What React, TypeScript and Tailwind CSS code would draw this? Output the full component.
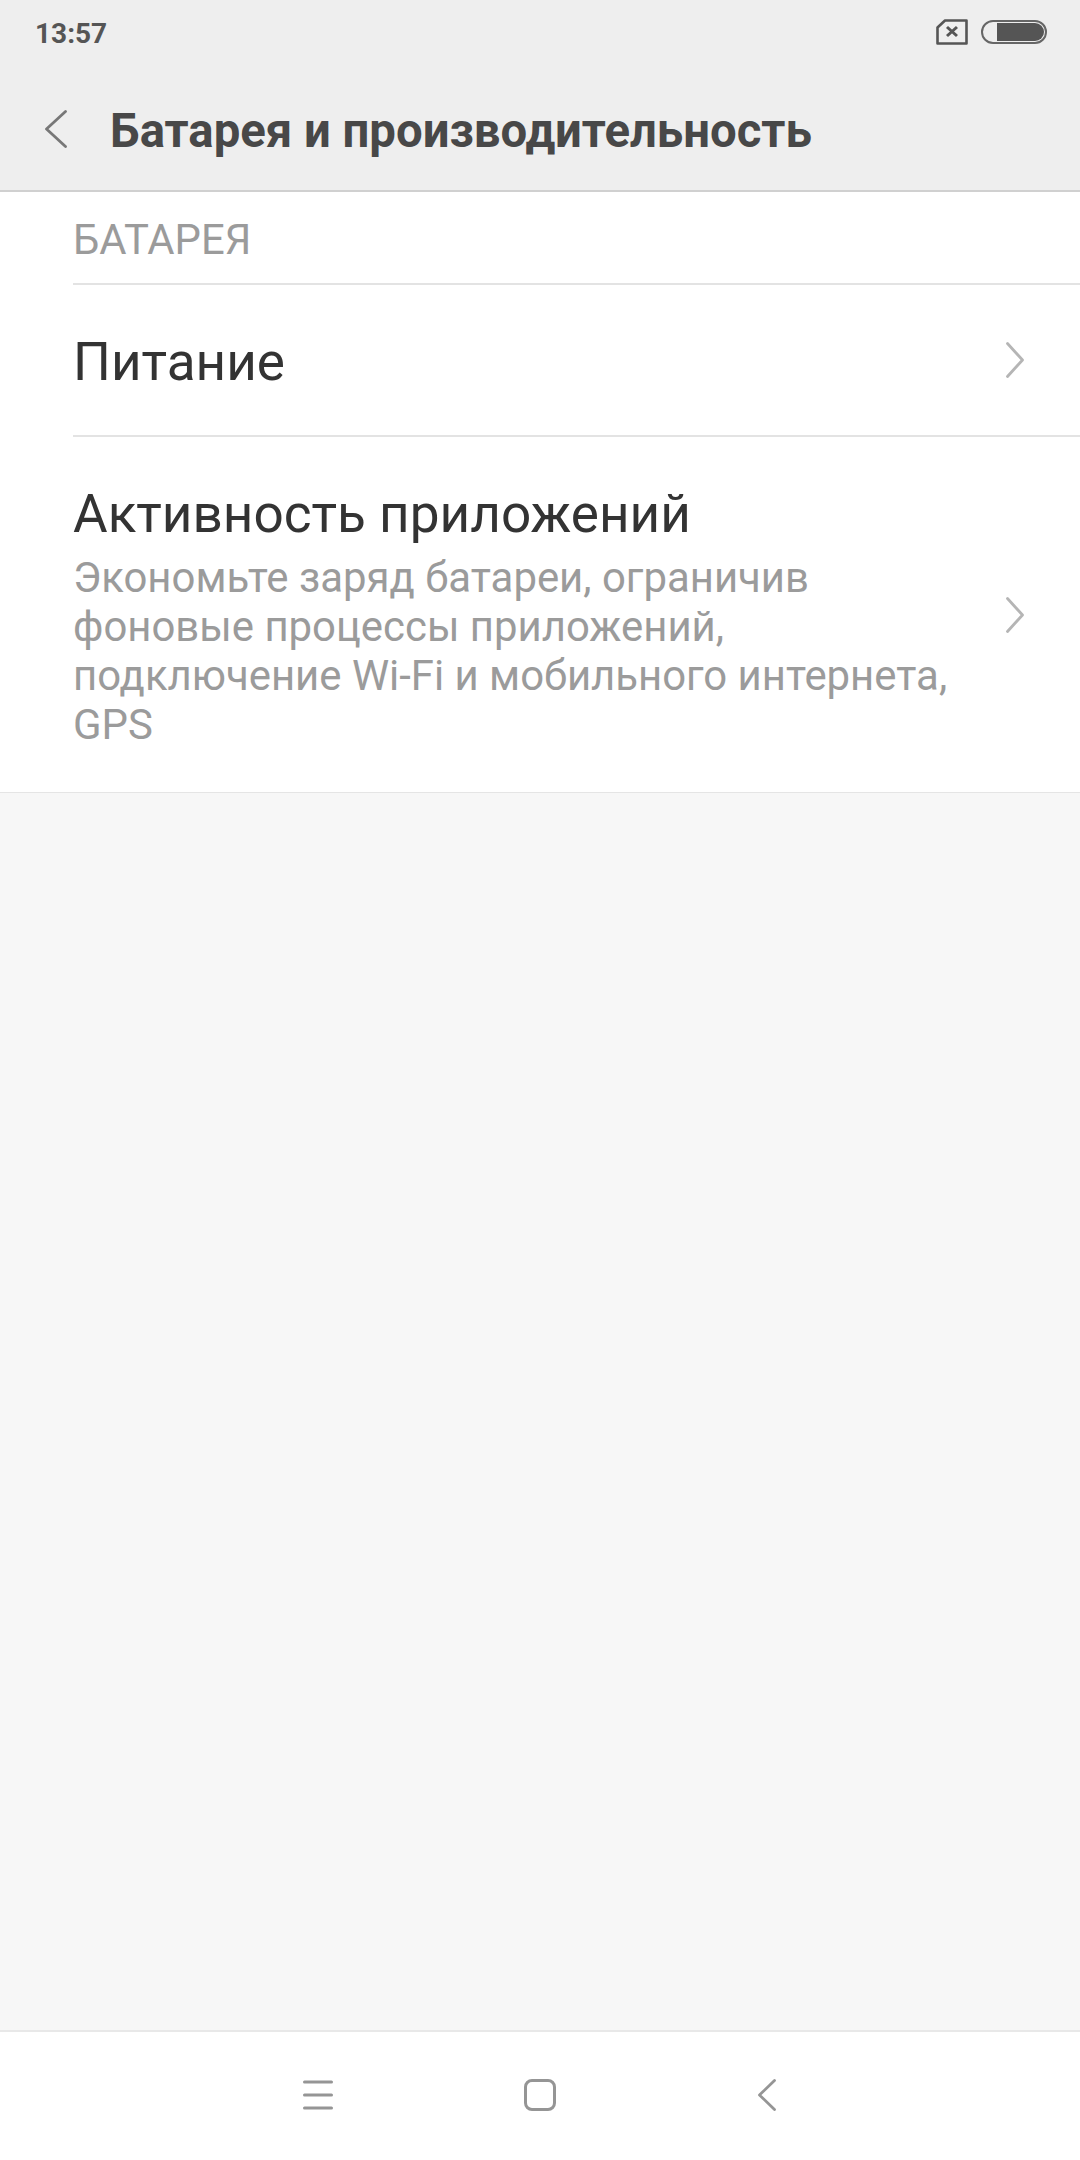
import React from "react";

const Chevron = () => (
	<svg width="18" height="36" viewBox="0 0 18 36" fill="none" className="shrink-0">
		<path d="M1.5 1.5 L16.5 18 L1.5 34.5" stroke="#b5b5b5" strokeWidth="2.8" strokeLinecap="round" strokeLinejoin="round" />
	</svg>
);

const App: React.FC = () => {
	return (
		<div className="flex flex-col w-[1080px] h-[2160px] bg-[#f7f7f7] font-['Roboto',sans-serif]">
			<div className="bg-[#eeeeee] h-[192px] border-b-2 border-[#d0d0d0] shrink-0">
				<div className="flex items-center justify-between h-[66px] pl-[35px] pr-[33px]">
					<span className="text-[28px] font-bold text-[#555555] pt-[2px]">13:57</span>
					<div className="flex items-center gap-[13px]">
						<svg width="32" height="26" viewBox="0 0 32 26" fill="none" className="mb-[3px]">
							<path d="M9 1.5 H30.5 V24.5 H1.5 V8.5 Z" stroke="#555555" strokeWidth="2.6" strokeLinejoin="round" />
							<path d="M11 8 L21 17 M21 8 L11 17" stroke="#555555" strokeWidth="3" />
						</svg>
						<div className="flex justify-end w-[66px] h-[24px] rounded-full border-2 border-[#666666] p-[1px] mb-[2px]">
							<div className="w-[47px] h-[18px] rounded-r-full bg-[#555555]" />
						</div>
					</div>
				</div>
				<div className="flex items-center h-[130px] pl-[45px]">
					<svg width="22" height="38" viewBox="0 0 22 38" fill="none" className="shrink-0 mb-[5px]">
						<path d="M20.5 1.5 L1.5 19 L20.5 36.5" stroke="#777777" strokeWidth="2.8" strokeLinecap="round" strokeLinejoin="round" />
					</svg>
					<h1 className="ml-[43px] text-[47.3px] font-bold text-[#484848]">Батарея и производительность</h1>
				</div>
			</div>
			<div className="bg-white border-b border-[#e5e5e5] shrink-0">
				<div className="pl-[73px]">
					<div className="h-[93px] border-b-2 border-[#e3e3e3] flex items-center pt-[6px] text-[41.8px] text-[#9b9b9b]">БАТАРЕЯ</div>
				</div>
				<div className="pl-[73px]">
					<div className="h-[152px] border-b-2 border-[#e3e3e3] flex items-center justify-between pr-[56px]">
						<span className="text-[53.1px] text-[#333333] pt-[6px]">Питание</span>
						<Chevron />
					</div>
				</div>
				<div className="pl-[73px] pr-[56px] h-[355px] flex items-center justify-between">
					<div className="w-[900px]">
						<div className="text-[53.1px] leading-[66px] text-[#333333] pb-[6px]">Активность приложений</div>
						<p className="text-[41.9px] leading-[49px] text-[#9b9b9b]">
							Экономьте заряд батареи, ограничив<br />
							фоновые процессы приложений,<br />
							подключение Wi-Fi и мобильного интернета,<br />
							GPS
						</p>
					</div>
					<Chevron />
				</div>
			</div>
			<div className="flex-1" />
			<div className="h-[130px] bg-white border-t-2 border-[#e8e8e8] flex items-center pl-[303px] pb-[2px] shrink-0">
				<svg width="30" height="30" viewBox="0 0 30 30" fill="none">
					<path d="M1.5 2 H28.5 M1.5 15 H28.5 M1.5 28 H28.5" stroke="#959595" strokeWidth="3" strokeLinecap="round" />
				</svg>
				<div className="ml-[191px] w-[32px] h-[32px] rounded-[8px] border-[3px] border-[#959595]" />
				<svg width="18" height="32" viewBox="0 0 18 32" fill="none" className="ml-[202px]">
					<path d="M16.5 1.5 L1.5 16 L16.5 30.5" stroke="#959595" strokeWidth="2.8" strokeLinecap="round" strokeLinejoin="round" />
				</svg>
			</div>
		</div>
	);
};

export default App;
